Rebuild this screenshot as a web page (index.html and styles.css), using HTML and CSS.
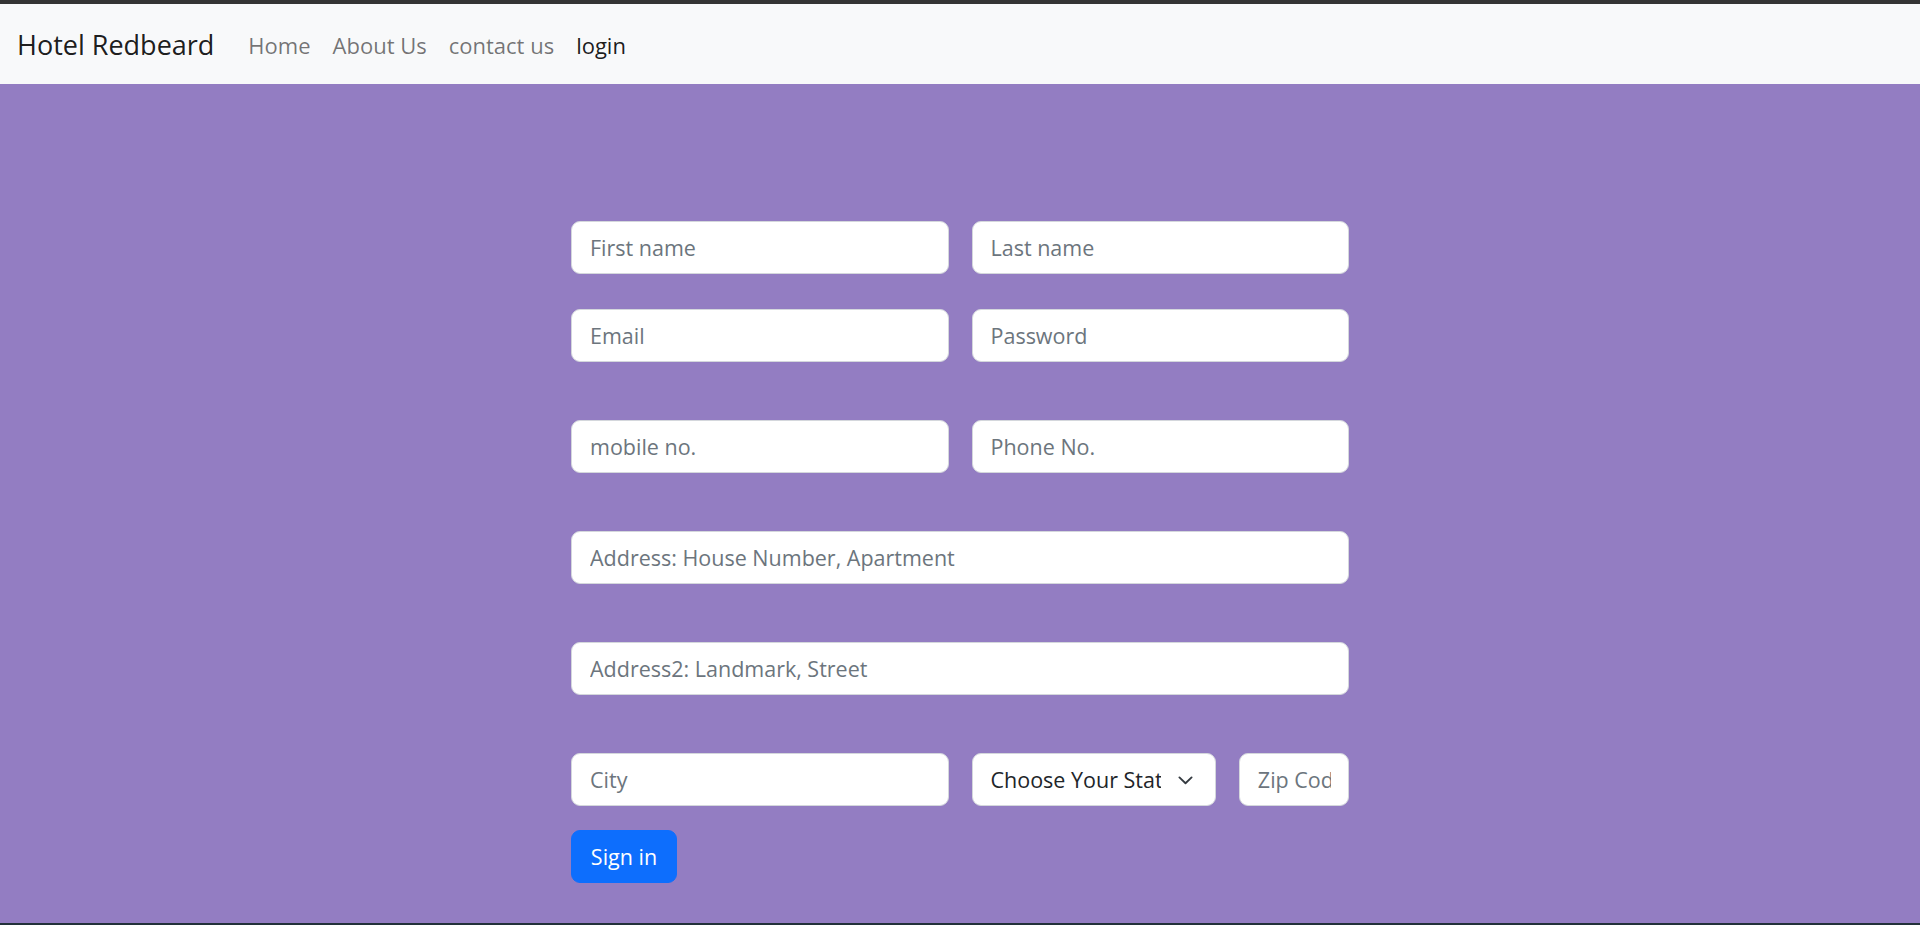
FILE: index.html
```html
<!DOCTYPE html>
<html lang="en">
<head>
<meta charset="utf-8">
<title>Hotel Redbeard</title>
<link rel="stylesheet" href="styles.css">
</head>
<body>
<nav class="navbar">
  <a class="brand" href="#">Hotel Redbeard</a>
  <ul class="nav-links">
    <li><a class="nav-link" href="#">Home</a></li>
    <li><a class="nav-link" href="#">About Us</a></li>
    <li><a class="nav-link" href="#">contact us</a></li>
    <li><a class="nav-link active" href="#">login</a></li>
  </ul>
</nav>
<main class="main">
  <form class="signup">
    <div class="row row-two gap-sm">
      <input class="field" type="text" placeholder="First name">
      <input class="field" type="text" placeholder="Last name">
    </div>
    <div class="row row-two gap-lg">
      <input class="field" type="email" placeholder="Email">
      <input class="field" type="password" placeholder="Password">
    </div>
    <div class="row row-two gap-lg">
      <input class="field" type="text" placeholder="mobile no.">
      <input class="field" type="text" placeholder="Phone No.">
    </div>
    <div class="row row-one gap-lg">
      <input class="field" type="text" placeholder="Address: House Number, Apartment">
    </div>
    <div class="row row-one gap-lg">
      <input class="field" type="text" placeholder="Address2: Landmark, Street">
    </div>
    <div class="row row-three gap-btn">
      <input class="field" type="text" placeholder="City">
      <div class="select-wrap">
        <select class="field select">
          <option>Choose Your State</option>
        </select>
        <svg class="chevron" viewBox="0 0 16 9" width="15" height="9" aria-hidden="true"><path d="M1.5 1.2 8 7.4l6.5-6.2" fill="none" stroke="#343a40" stroke-width="2" stroke-linecap="round" stroke-linejoin="round"/></svg>
      </div>
      <input class="field" type="text" placeholder="Zip Code">
    </div>
    <div class="actions">
      <button class="btn" type="button">Sign in</button>
    </div>
  </form>
</main>
</body>
</html>
```

FILE: styles.css
```css
* {
  box-sizing: border-box;
}

html, body {
  margin: 0;
  padding: 0;
  height: 100%;
}

body {
  font-family: "Open Sans", "Noto Sans", sans-serif;
  background: #937dc2;
  border-top: 4px solid #343434;
  border-bottom: 2px solid #22313a;
  display: flex;
  flex-direction: column;
  overflow: hidden;
  color: #212529;
}

.navbar {
  height: 80px;
  background: #f8f9fa;
  display: flex;
  align-items: center;
  padding: 2px 17px 0;
  flex: none;
}

.brand {
  font-size: 27px;
  color: rgba(0, 0, 0, 0.9);
  text-decoration: none;
  margin-right: 23px;
  line-height: 1.4;
}

.nav-links {
  list-style: none;
  display: flex;
  margin: 0;
  padding: 0;
}

.nav-link {
  display: block;
  font-size: 22px;
  color: rgba(0, 0, 0, 0.55);
  text-decoration: none;
  padding: 8px 11px;
  line-height: 1.4;
}

.nav-link.active {
  color: rgba(0, 0, 0, 0.9);
}

.main {
  flex: 1;
  padding-top: 137px;
}

.signup {
  width: 778px;
  margin: 0 auto;
  display: flex;
  flex-direction: column;
}

.row {
  display: grid;
  column-gap: 23px;
}

.row-two {
  grid-template-columns: 1fr 1fr;
}

.row-one {
  grid-template-columns: 1fr;
}

.row-three {
  grid-template-columns: 377fr 244fr 110fr;
}

.gap-sm {
  margin-bottom: 35px;
}

.gap-lg {
  margin-bottom: 58px;
}

.gap-btn {
  margin-bottom: 24px;
}

.field {
  display: block;
  width: 100%;
  height: 53px;
  padding: 0 17px 0 18px;
  font-family: inherit;
  font-size: 21.5px;
  color: #212529;
  background: #fff;
  border: 1px solid #d4d7dc;
  border-radius: 9px;
  outline: none;
}

.field::placeholder {
  color: #6c757d;
  opacity: 1;
}

.select-wrap {
  position: relative;
}

.select {
  appearance: none;
  -webkit-appearance: none;
  padding-right: 54px;
  white-space: nowrap;
  overflow: hidden;
}

.chevron {
  position: absolute;
  top: 23px;
  right: 23px;
  pointer-events: none;
}

.actions {
  display: flex;
}

.btn {
  height: 53px;
  width: 106px;
  font-family: inherit;
  font-size: 21.5px;
  color: #fff;
  background: #0d6efd;
  border: 1px solid #0d6efd;
  border-radius: 9px;
  padding: 0 17px;
  cursor: pointer;
}
```
